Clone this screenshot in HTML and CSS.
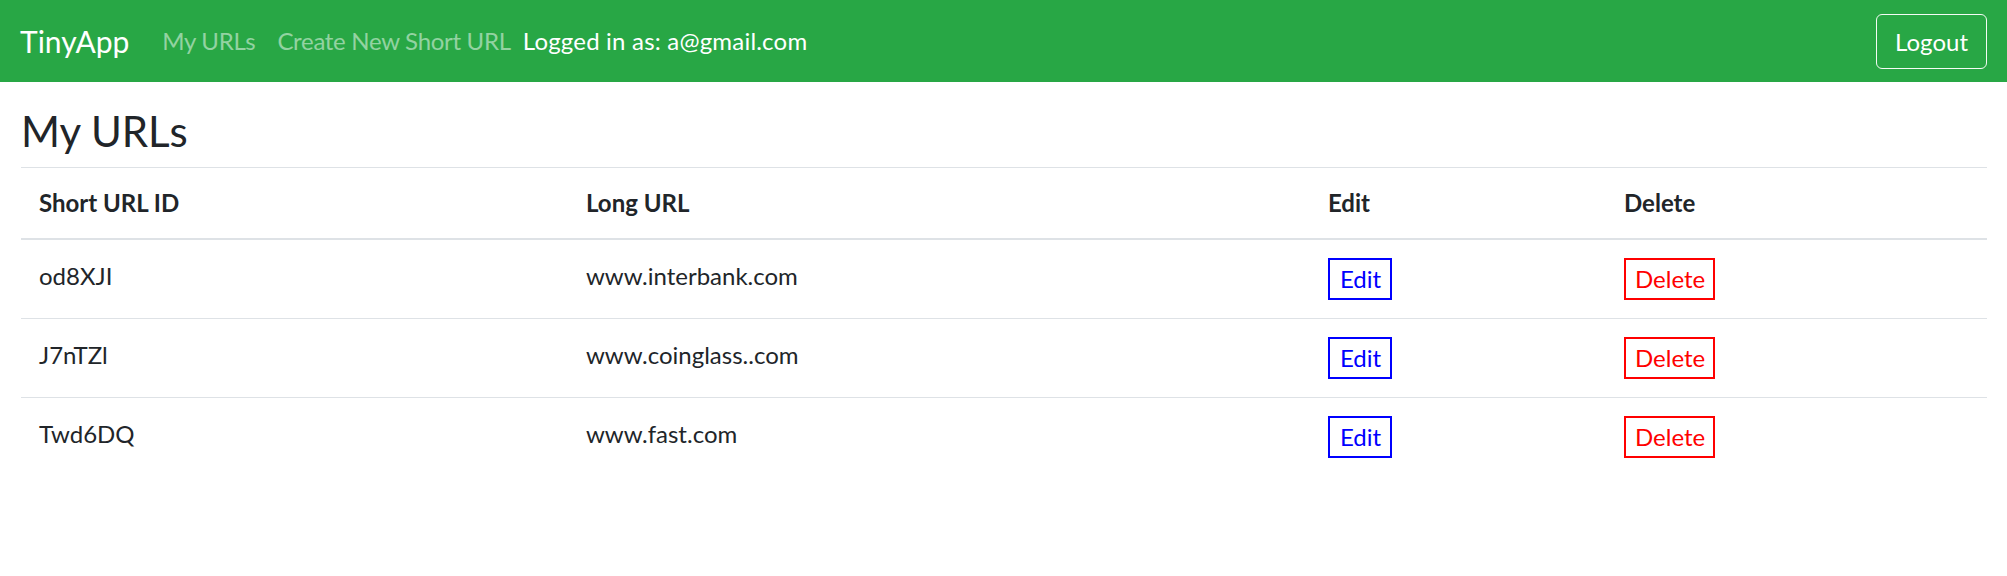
FILE: index.html
```html
<!DOCTYPE html>
<html lang="en">
<head>
<meta charset="utf-8">
<title>TinyApp</title>
<link rel="stylesheet" href="styles.css">
</head>
<body>
<nav class="navbar">
  <a class="brand" href="#">TinyApp</a>
  <div class="nav-items">
    <a class="nav-link" href="#">My URLs</a>
    <a class="nav-link" href="#">Create New Short URL</a>
    <span class="logged">Logged in as: a@gmail.com</span>
  </div>
  <button class="logout" type="button">Logout</button>
</nav>
<main class="container">
  <h3 class="title">My URLs</h3>
  <table class="url-table">
    <colgroup>
      <col class="c-short">
      <col class="c-long">
      <col class="c-edit">
      <col class="c-del">
    </colgroup>
    <thead>
      <tr>
        <th>Short URL ID</th>
        <th>Long URL</th>
        <th>Edit</th>
        <th>Delete</th>
      </tr>
    </thead>
    <tbody>
      <tr>
        <td>od8XJI</td>
        <td>www.interbank.com</td>
        <td><button class="btn btn-edit" type="button">Edit</button></td>
        <td><button class="btn btn-del" type="button">Delete</button></td>
      </tr>
      <tr>
        <td>J7nTZl</td>
        <td>www.coinglass..com</td>
        <td><button class="btn btn-edit" type="button">Edit</button></td>
        <td><button class="btn btn-del" type="button">Delete</button></td>
      </tr>
      <tr>
        <td>Twd6DQ</td>
        <td>www.fast.com</td>
        <td><button class="btn btn-edit" type="button">Edit</button></td>
        <td><button class="btn btn-del" type="button">Delete</button></td>
      </tr>
    </tbody>
  </table>
</main>
</body>
</html>
```
FILE: styles.css
```css
* { box-sizing: border-box; }

body {
  margin: 0;
  font-family: Lato, "Noto Sans", sans-serif;
  font-size: 24px;
  line-height: 36px;
  color: #212529;
  background: #fff;
}

.navbar {
  height: 82px;
  background: #28a745;
  display: flex;
  align-items: center;
  padding: 0 20px 0 20px;
}

.brand {
  font-size: 30px;
  line-height: 40px;
  color: #fff;
  text-decoration: none;
  margin-right: 22px;
}

.nav-items {
  display: flex;
  align-items: center;
  flex: 1;
}

.nav-link {
  color: rgba(255, 255, 255, 0.5);
  text-decoration: none;
  padding: 0 11px;
  line-height: 36px;
  letter-spacing: -0.3px;
}

.logged {
  color: #fff;
  margin-left: 1px;
  line-height: 36px;
  letter-spacing: 0.2px;
}

.logout {
  font-family: inherit;
  font-size: 24px;
  height: 55px;
  line-height: 51px;
  padding: 0 18px;
  color: #fff;
  background: transparent;
  border: 1.5px solid rgba(255, 255, 255, 0.95);
  border-radius: 6px;
}

.container {
  padding: 24px 20px 0 21px;
}

.title {
  font-size: 42px;
  font-weight: 400;
  line-height: 50px;
  margin: 0 0 11px;
}

.url-table {
  width: 100%;
  table-layout: fixed;
  border-collapse: separate;
  border-spacing: 0;
}

.c-short { width: 547px; }
.c-long { width: 742px; }
.c-edit { width: 296px; }
.c-del { width: auto; }

.url-table th {
  text-align: left;
  font-weight: 700;
  padding: 17px 18px;
  line-height: 36px;
  border-top: 1px solid #dee2e6;
  border-bottom: 2px solid #dee2e6;
  vertical-align: top;
}

.url-table td {
  padding: 18px 18px;
  line-height: 36px;
  vertical-align: top;
  border-top: 1px solid #dee2e6;
}

.url-table tbody tr:first-child td {
  border-top: none;
}

.btn {
  display: inline-flex;
  align-items: center;
  height: 42px;
  padding: 0 9px 0 10px;
  font-family: inherit;
  font-size: 24px;
  line-height: 38px;
  background: #fff;
  border: 2px solid;
  border-radius: 0;
}

.btn-edit {
  color: #0000ff;
  border-color: #0000ff;
}

.btn-del {
  color: #ff0000;
  border-color: #ff0000;
  padding: 0 8px 0 9px;
}
```
